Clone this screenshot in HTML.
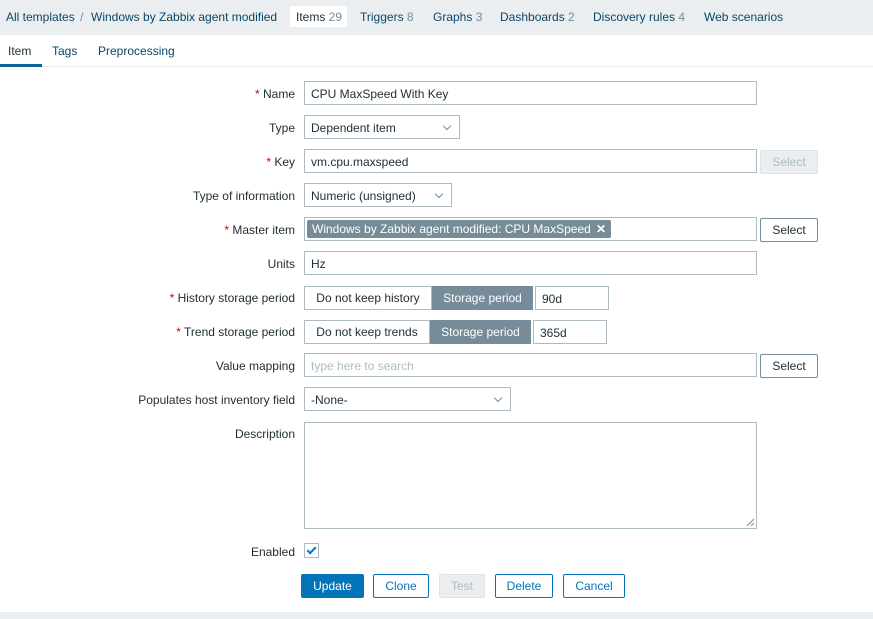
<!DOCTYPE html>
<html><head><meta charset="utf-8"><style>
*{box-sizing:border-box;margin:0;padding:0}
body{width:873px;height:619px;background:#fff;font-family:"Liberation Sans",Arial,sans-serif;font-size:12px;color:#1f2c33;position:relative;overflow:hidden}
.a{position:absolute}
.top{left:0;top:0;width:873px;height:35px;background:#ebeef0}
.top span{position:absolute;top:10px;color:#0a466a}
.top .n{color:#768d99}
.lnk{color:#0a466a}
.lbl{position:absolute;right:578px;text-align:right;white-space:nowrap;color:#1f2c33}
.req{color:#d40000}
.in{position:absolute;border:1px solid #acbbc2;background:#fff;height:24px;padding:5px 6px 3px;line-height:14px;white-space:nowrap}
.sel:after{content:"";position:absolute;right:9px;top:7px;width:5px;height:5px;border-right:1px solid #768d99;border-bottom:1px solid #768d99;transform:rotate(45deg)}
.btn{position:absolute;height:24px;border:1px solid #0275b8;color:#0275b8;background:#fff;text-align:center;line-height:22px;border-radius:2px}
.dis{border-color:#e0e3e5 !important;background:#ebeef0 !important;color:#acbbc2 !important}
.seg{position:absolute;height:24px;border:1px solid #acbbc2;line-height:22px;text-align:center;background:#fff}
.segon{background:#768d99;color:#fff;border-color:#768d99}
</style></head><body>
<div class="a top">
<span style="left:6px">All templates</span>
<span style="left:80px;color:#768d99">/</span>
<span style="left:91px">Windows by Zabbix agent modified</span>
<div class="a" style="left:290px;top:6px;width:57px;height:21px;background:#fff"></div>
<span style="left:296px;color:#1f2c33">Items <span class="n" style="position:static">29</span></span>
<span style="left:360px">Triggers <span class="n" style="position:static">8</span></span>
<span style="left:433px">Graphs <span class="n" style="position:static">3</span></span>
<span style="left:500px">Dashboards <span class="n" style="position:static">2</span></span>
<span style="left:593px">Discovery rules <span class="n" style="position:static">4</span></span>
<span style="left:704px">Web scenarios</span>
</div>
<div class="a" style="left:8px;top:44px">Item</div>
<div class="a lnk" style="left:52px;top:44px">Tags</div>
<div class="a lnk" style="left:98px;top:44px">Preprocessing</div>
<div class="a" style="left:0;top:64px;width:42px;height:3px;background:#0a6394"></div>
<div class="a" style="left:42px;top:66px;width:831px;height:1px;background:#ebeef0"></div>

<div class="lbl" style="top:87px"><span class="req">*</span> Name</div>
<div class="in" style="left:304px;top:81px;width:453px">CPU MaxSpeed With Key</div>

<div class="lbl" style="top:121px">Type</div>
<div class="in sel" style="left:304px;top:115px;width:156px">Dependent item</div>

<div class="lbl" style="top:155px"><span class="req">*</span> Key</div>
<div class="in" style="left:304px;top:149px;width:453px">vm.cpu.maxspeed</div>
<div class="btn dis" style="left:760px;top:150px;width:58px">Select</div>

<div class="lbl" style="top:189px">Type of information</div>
<div class="in sel" style="left:304px;top:183px;width:148px">Numeric (unsigned)</div>

<div class="lbl" style="top:223px"><span class="req">*</span> Master item</div>
<div class="in" style="left:304px;top:217px;width:453px;padding:0"></div>
<div class="a" style="left:307px;top:220px;width:304px;height:18px;background:#768d99;color:#fff;line-height:18px;padding-left:5px;border-radius:2px">Windows by Zabbix agent modified: CPU MaxSpeed <b style="position:absolute;right:5px">✕</b></div>
<div class="btn" style="left:760px;top:218px;width:58px;border-color:#768d99;color:#1f2c33">Select</div>

<div class="lbl" style="top:257px">Units</div>
<div class="in" style="left:304px;top:251px;width:453px">Hz</div>

<div class="lbl" style="top:291px"><span class="req">*</span> History storage period</div>
<div class="seg" style="left:304px;top:286px;width:128px">Do not keep history</div>
<div class="seg segon" style="left:432px;top:286px;width:101px">Storage period</div>
<div class="in" style="left:535px;top:286px;width:74px;height:24px">90d</div>

<div class="lbl" style="top:325px"><span class="req">*</span> Trend storage period</div>
<div class="seg" style="left:304px;top:320px;width:126px">Do not keep trends</div>
<div class="seg segon" style="left:430px;top:320px;width:101px">Storage period</div>
<div class="in" style="left:533px;top:320px;width:74px">365d</div>

<div class="lbl" style="top:359px">Value mapping</div>
<div class="in" style="left:304px;top:353px;width:453px;color:#acbbc2">type here to search</div>
<div class="btn" style="left:760px;top:354px;width:58px;border-color:#768d99;color:#1f2c33">Select</div>

<div class="lbl" style="top:393px">Populates host inventory field</div>
<div class="in sel" style="left:304px;top:387px;width:207px">-None-</div>

<div class="lbl" style="top:427px">Description</div>
<div class="in" style="left:304px;top:422px;width:453px;height:107px"></div>
<svg class="a" style="left:746px;top:518px" width="9" height="9"><path d="M1 8L8 1M5 8L8 5" stroke="#888" stroke-width="1"/></svg>

<div class="lbl" style="top:545px">Enabled</div>
<div class="a" style="left:304px;top:543px;width:15px;height:15px;border:1px solid #acbbc2;background:#fff"><div class="a" style="left:4px;top:1px;width:5px;height:9px;border-right:2px solid #0275b8;border-bottom:2px solid #0275b8;transform:rotate(45deg)"></div></div>

<div class="btn" style="left:301px;top:574px;width:63px;background:#0275b8;color:#fff">Update</div>
<div class="btn" style="left:373px;top:574px;width:56px">Clone</div>
<div class="btn dis" style="left:439px;top:574px;width:46px">Test</div>
<div class="btn" style="left:495px;top:574px;width:58px">Delete</div>
<div class="btn" style="left:563px;top:574px;width:62px">Cancel</div>

<div class="a" style="left:0;top:612px;width:873px;height:7px;background:#ebeef0"></div>
</body></html>
